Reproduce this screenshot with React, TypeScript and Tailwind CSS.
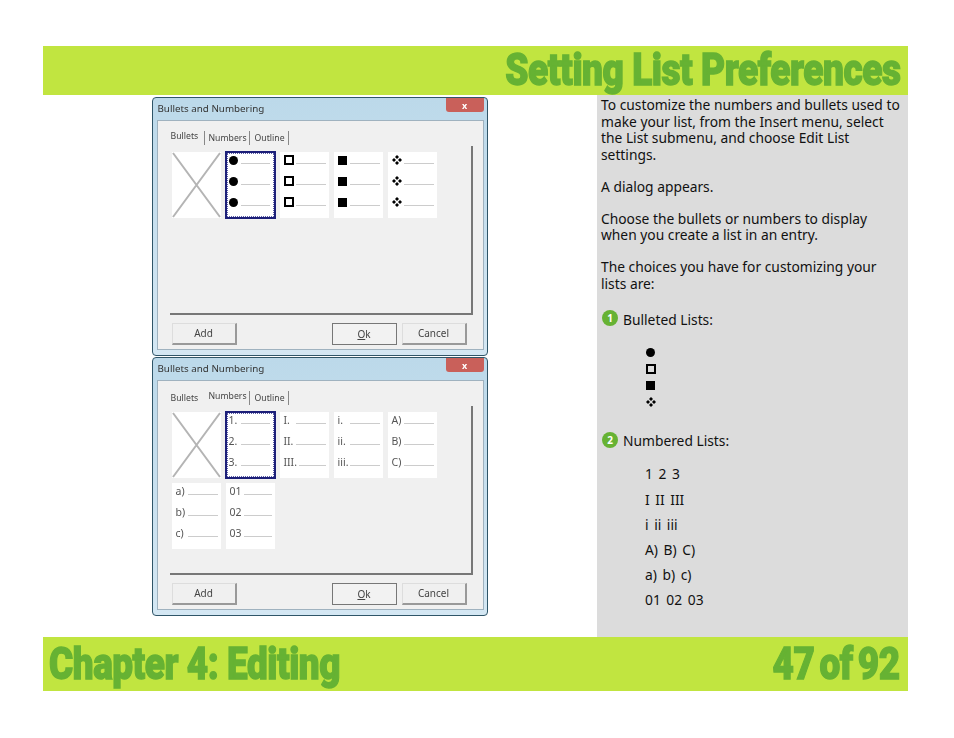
import React from 'react'

const titleFont = "font-['Roboto',sans-serif] font-black text-[#66b233] [-webkit-text-stroke:1.2px_#66b233] leading-none tracking-[-0.5px] scale-y-[1.12] whitespace-nowrap"
const bodyFont = "font-['Noto_Sans','DejaVu_Sans',sans-serif]"

type Mark = 'circle' | 'hollow' | 'square' | 'diamond'

function BulletMark({ kind, size = 9 }: { kind: Mark; size?: number }) {
  if (kind === 'diamond') {
    return (
      <svg width={size + 1} height={size + 1} viewBox="0 0 10 10" className="block">
        <path d="M5 0l2 2-2 2-2-2zM2 3l2 2-2 2-2-2zM8 3l2 2-2 2-2-2zM5 6l2 2-2 2-2-2z" fill="#000" />
      </svg>
    )
  }
  if (kind === 'circle') return <div className="rounded-full bg-black" style={{ width: size, height: size }} />
  if (kind === 'square') return <div className="bg-black" style={{ width: size, height: size }} />
  return <div className="border-2 border-black" style={{ width: size + 1, height: size + 1 }} />
}

function SwatchRows({ items }: { items: React.ReactNode[] }) {
  return (
    <div className="flex flex-col gap-[5px]">
      {items.map((item, i) => (
        <div key={i} className="h-[16px] flex items-center gap-[2px] text-[10.5px] leading-none text-[#555]">
          <div className="min-w-[10px] flex items-center">{item}</div>
          <div className="flex-1 h-px bg-[#ccc] mt-[7px] mr-[3px]" />
        </div>
      ))}
    </div>
  )
}

function Swatch({ items, selected }: { items: React.ReactNode[]; selected?: boolean }) {
  if (selected) {
    return (
      <div className="w-[51px] h-[68px] -my-px -mx-px bg-white border-2 border-[#1c1f78]">
        <div className="h-full border border-dotted border-[#5a5ca8] pl-[1px]">
          <div className="-mt-[2px]">
            <SwatchRows items={items} />
          </div>
        </div>
      </div>
    )
  }
  return (
    <div className="w-[49px] h-[66px] bg-white pl-[4px]">
      <SwatchRows items={items} />
    </div>
  )
}

function NoneSwatch() {
  return (
    <div className="w-[49px] h-[66px] bg-white">
      <svg width="49" height="66" viewBox="0 0 49 66" className="block">
        <path d="M1 1L48 65M48 1L1 65" stroke="#b4b4b4" strokeWidth="2" />
      </svg>
    </div>
  )
}

function DialogButton({ label, primary }: { label: React.ReactNode; primary?: boolean }) {
  return (
    <div className={`h-[22px] w-[65px] flex items-center justify-center text-[10px] text-[#444] ${primary ? 'border border-[#777] bg-[#f2f2f2]' : 'border-r-2 border-b-2 border-[#999] border-t border-l border-t-[#ddd] border-l-[#ddd]'}`}>
      {label}
    </div>
  )
}

const tabs = [
  { name: 'Bullets', w: 'w-[34px] -ml-px' },
  { name: 'Numbers', w: 'w-[45px] pl-[4px]' },
  { name: 'Outline', w: 'w-[39px] pl-[5px]' },
]

function Dialog({ active, rows }: { active: 'Bullets' | 'Numbers'; rows: React.ReactNode }) {
  return (
    <div className="w-[336px] h-[259px] rounded-[4px] border-[1.5px] border-[#2f5568] bg-gradient-to-b from-[#bcd9ea] to-[#d4e7f3] px-[3.5px] pb-[5px] flex flex-col blur-[0.35px] shrink-0">
      <div className="h-[22px] flex items-center justify-between pl-[1px]">
        <span className="text-[9.8px] text-[#333]">Bullets and Numbering</span>
        <div className="w-[38px] h-[14px] rounded-b-[3px] -mt-[8px] bg-[#c9605a] flex items-center justify-center text-white text-[9px] font-bold leading-none">x</div>
      </div>
      <div className="flex-1 bg-[#f0f0f0] border border-[#9fb2bf] pl-[14px] pr-[10px] flex flex-col">
        <div className="h-[25px] flex items-end text-[8.7px] text-[#444]">
          {tabs.map(t => (
            <div key={t.name} className={`${t.w} h-[14px] flex items-center justify-start leading-none mb-px ${t.name === 'Bullets' && active !== 'Bullets' ? '' : 'border-r border-[#888]'}`}>
              <span className={t.name === active ? '-mt-[4px]' : ''}>{t.name}</span>
            </div>
          ))}
        </div>
        <div className="h-[169px] border-r-2 border-b-2 border-[#777] pt-[6px] flex flex-col gap-[5px] -ml-[2px] pl-[2px]">
          {rows}
        </div>
        <div className="flex justify-between items-start pt-[8px] pr-[6px]">
          <DialogButton label="Add" />
          <div className="flex gap-[5px]">
            <DialogButton primary label={<span><u>O</u>k</span>} />
            <DialogButton label="Cancel" />
          </div>
        </div>
      </div>
    </div>
  )
}

function NumberBadge({ n }: { n: number }) {
  return (
    <span className="w-[16px] h-[16px] rounded-full bg-[#66b233] text-white text-[10px] font-bold leading-none flex items-center justify-center shrink-0 -mt-[4px]">{n}</span>
  )
}

const bulletRow: Mark[] = ['circle', 'hollow', 'square', 'diamond']
const numberSets = [['1.', '2.', '3.'], ['I.', 'II.', 'III.'], ['i.', 'ii.', 'iii.'], ['A)', 'B)', 'C)']]
const numberSets2 = [['a)', 'b)', 'c)'], ['01', '02', '03']]
const numberedLines = ['1 2 3', 'I II III', 'i ii iii', 'A) B) C)', 'a) b) c)', '01 02 03']

export default function App() {
  return (
    <div className={`w-[954px] h-[738px] bg-white pt-[46px] pl-[43px] ${bodyFont}`}>
      <div className="w-[865px]">
        <header className="h-[49px] bg-[#c1e540] flex items-center justify-end pr-[7px]">
          <h1 className={`${titleFont} text-[39px] scale-x-[0.951] origin-right`}>Setting List Preferences</h1>
        </header>

        <div className="flex h-[542px]">
          <div className="w-[554px] pl-[109px] pt-[2px] flex flex-col gap-px">
            <Dialog
              active="Bullets"
              rows={
                <div className="flex gap-[5px]">
                  <NoneSwatch />
                  {bulletRow.map((k, i) => (
                    <Swatch key={k} selected={i === 0} items={[0, 1, 2].map(n => <BulletMark key={n} kind={k} />)} />
                  ))}
                </div>
              }
            />
            <Dialog
              active="Numbers"
              rows={
                <>
                  <div className="flex gap-[5px]">
                    <NoneSwatch />
                    {numberSets.map((s, i) => <Swatch key={i} selected={i === 0} items={s} />)}
                  </div>
                  <div className="flex gap-[5px]">
                    {numberSets2.map((s, i) => <Swatch key={i} items={s} />)}
                  </div>
                </>
              }
            />
          </div>

          <aside className="w-[311px] bg-[#dcdcdc] pl-[4px] pt-[2px] text-[13.8px] leading-[16.6px] text-[#111]">
            <p>To customize the numbers and bullets used to<br />make your list, from the Insert menu, select<br />the List submenu, and choose Edit List<br />settings.</p>
            <p className="mt-[15.4px]">A dialog appears.</p>
            <p className="mt-[15.4px]">Choose the bullets or numbers to display<br />when you create a list in an entry.</p>
            <p className="mt-[15.4px]">The choices you have for customizing your<br />lists are:</p>
            <div className="mt-[19px] flex items-center gap-[5px] pl-[1px]"><NumberBadge n={1} /><span>Bulleted Lists:</span></div>
            <div className="mt-[16px] pl-[45px] flex flex-col">
              {bulletRow.map(k => (
                <div key={k} className="h-[16.6px] flex items-center"><BulletMark kind={k} /></div>
              ))}
            </div>
            <div className="mt-[23px] flex items-center gap-[5px] pl-[1px]"><NumberBadge n={2} /><span>Numbered Lists:</span></div>
            <div className="mt-[12px] pl-[44px] flex flex-col [word-spacing:2px]">
              {numberedLines.map(l => <div key={l} className="h-[25.2px] flex items-center">{l}</div>)}
            </div>
          </aside>
        </div>

        <footer className="h-[54px] bg-[#c1e540] flex items-center justify-between pl-[6px] pr-[8px]">
          <span className={`${titleFont} text-[40px] scale-x-[0.923] origin-left`}>Chapter 4: Editing</span>
          <span className={`${titleFont} text-[40px] scale-x-[0.923] origin-right [word-spacing:-4px]`}>47 of 92</span>
        </footer>
      </div>
    </div>
  )
}
